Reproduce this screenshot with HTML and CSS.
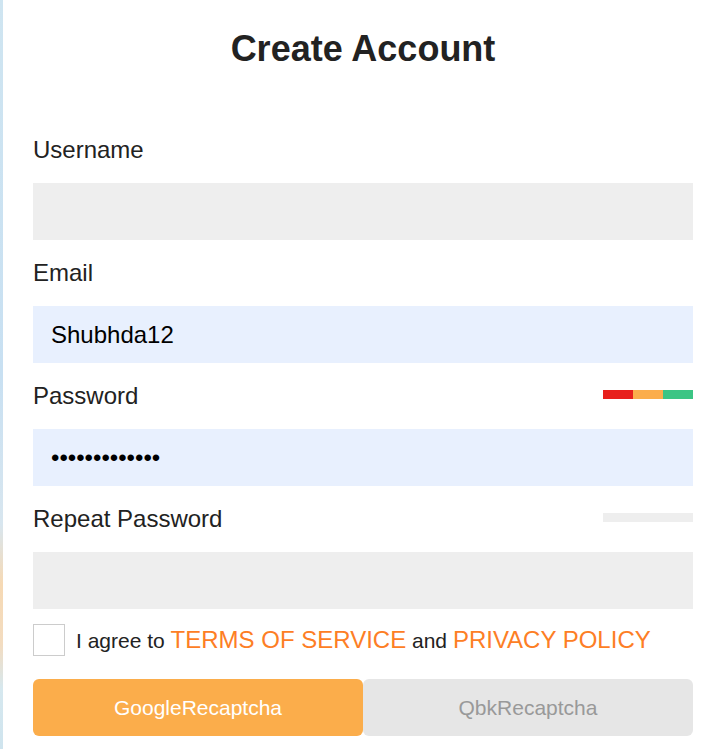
FILE: index.html
```html
<!DOCTYPE html>
<html lang="en">
<head>
    <meta charset="UTF-8">
    <meta name="viewport" content="width=device-width, initial-scale=1.0">
    <title>Create Account</title>
    <link rel="stylesheet" href="styles.css">
</head>
<body>

<div class="signup-card">
    <h2>Create Account</h2>
    <form id="signupForm">
        <div class="field-head">
            <label for="uname">Username</label>
        </div>
        <input type="text" id="uname" name="uname" class="field-input" />

        <div class="field-head">
            <label for="email">Email</label>
        </div>
        <input type="text" id="email" name="email" class="field-input filled" value="Shubhda12" />

        <div class="field-head">
            <label for="password">Password</label>
            <div class="strength">
                <span class="weak"></span>
                <span class="medium"></span>
                <span class="strong"></span>
            </div>
        </div>
        <input type="password" id="password" name="password" class="field-input filled" value="abcdefghijklm" />

        <div class="field-head">
            <label for="repeat">Repeat Password</label>
            <div class="strength empty"></div>
        </div>
        <input type="password" id="repeat" name="repeat" class="field-input" />

        <div class="agree-row">
            <input type="checkbox" id="agree" class="agree-box" />
            <label for="agree">I agree to <a href="#">TERMS OF SERVICE</a> and <a href="#">PRIVACY POLICY</a></label>
        </div>

        <div class="captcha-row">
            <button type="button" class="captcha active">GoogleRecaptcha</button>
            <button type="button" class="captcha">QbkRecaptcha</button>
        </div>
    </form>
</div>

</body>
</html>
```

FILE: styles.css
```css
body {
    font-family: "Liberation Sans", Arial, sans-serif;
    margin: 0;
    height: 749px;
    overflow: hidden;
    background: linear-gradient(to bottom, #cfe5f1 0%, #c8e0f2 50%, #d8e6ef 70%, #f6d9b4 78%, #f3dcc0 86%, #d6e8ef 92%, #cfe4ee 100%);
}
.signup-card {
    background-color: white;
    margin-left: 3px;
    height: 100%;
    padding: 27px 28px 0 30px;
    box-sizing: border-box;
    color: #222;
}
.signup-card h2 {
    text-align: center;
    font-size: 36px;
    line-height: 43px;
    margin: 0 0 47px;
}
.field-head {
    height: 66px;
    display: flex;
    align-items: center;
    justify-content: space-between;
}
.field-head label {
    font-size: 24px;
    color: #222;
}
.field-input {
    display: block;
    box-sizing: border-box;
    width: 100%;
    height: 57px;
    border: none;
    outline: none;
    padding: 0 18px;
    font-family: "Liberation Sans", Arial, sans-serif;
    font-size: 24px;
    color: #000;
    background-color: #eeeeee;
    margin: 0;
}
.field-input.filled {
    background-color: #e8f0fe;
}
.strength {
    display: flex;
    width: 90px;
    height: 9px;
    margin-bottom: 3px;
}
.strength span {
    flex: 1;
}
.strength .weak {
    background-color: #e8201c;
}
.strength .medium {
    background-color: #fbad4b;
}
.strength .strong {
    background-color: #3bc584;
}
.strength.empty {
    background-color: #eeeeee;
}
.agree-row {
    display: flex;
    align-items: center;
    margin-top: 15px;
    height: 32px;
    font-size: 21px;
    color: #222;
}
.agree-box {
    appearance: none;
    width: 32px;
    height: 32px;
    margin: 0 11px 0 0;
    border: 1px solid #cccccc;
    background: white;
}
.agree-row a {
    color: #fd7e25;
    font-size: 24px;
    text-decoration: none;
}
.captcha-row {
    display: flex;
    margin-top: 23px;
}
.captcha {
    flex: 1;
    height: 57px;
    border: none;
    border-radius: 6px;
    background-color: #e6e6e6;
    color: #999;
    font-family: "Liberation Sans", Arial, sans-serif;
    font-size: 21px;
    cursor: pointer;
}
.captcha.active {
    background-color: #fbad4b;
    color: white;
}
```
